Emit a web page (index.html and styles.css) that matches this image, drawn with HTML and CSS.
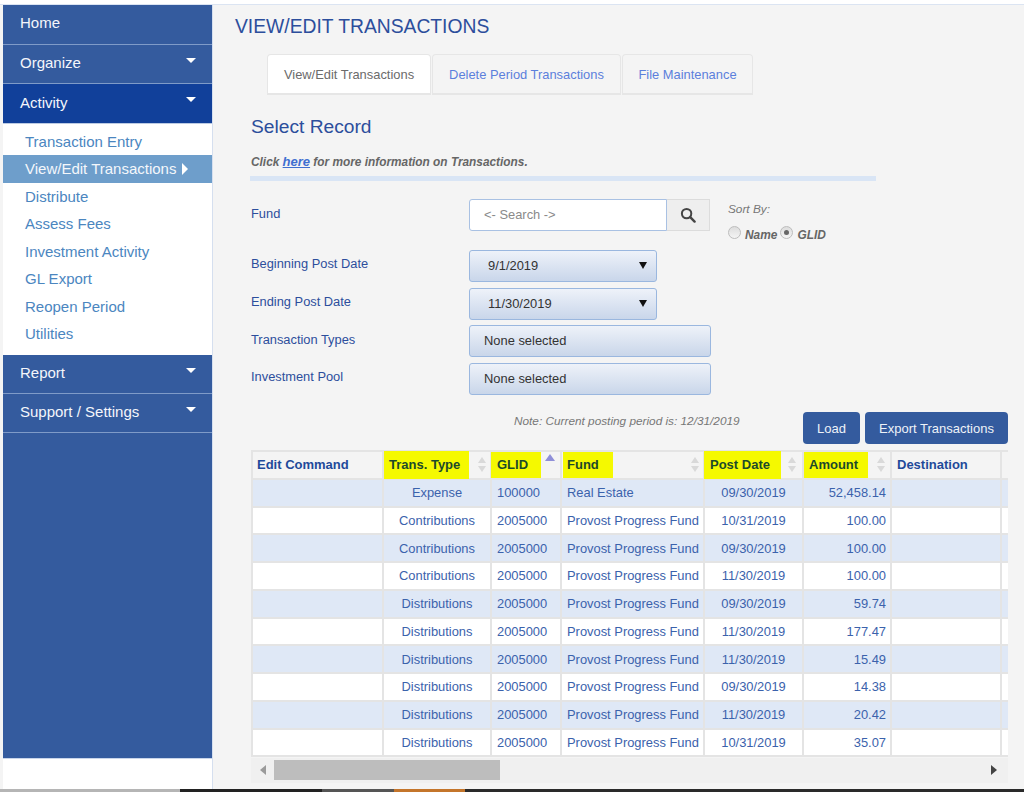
FILE: index.html
```html
<!DOCTYPE html>
<html lang="en">
<head>
<meta charset="utf-8">
<title>View/Edit Transactions</title>
<link rel="stylesheet" href="styles.css">
</head>
<body>
<div class="topstrip"></div>
<div class="shell">
  <nav class="sidebar">
    <a class="nav-item nav-home">Home</a>
    <a class="nav-item nav-org">Organize<i class="caret"></i></a>
    <a class="nav-item active">Activity<i class="caret"></i></a>
    <div class="submenu">
      <a class="sub-item">Transaction Entry</a>
      <a class="sub-item current">View/Edit Transactions<i class="caret-right"></i></a>
      <a class="sub-item">Distribute</a>
      <a class="sub-item">Assess Fees</a>
      <a class="sub-item">Investment Activity</a>
      <a class="sub-item">GL Export</a>
      <a class="sub-item">Reopen Period</a>
      <a class="sub-item">Utilities</a>
    </div>
    <a class="nav-item">Report<i class="caret"></i></a>
    <a class="nav-item">Support / Settings<i class="caret"></i></a>
    <div class="nav-fill"></div>
    <div class="nav-foot"></div>
  </nav>
  <main class="content">
    <h1 class="page-title">VIEW/EDIT TRANSACTIONS</h1>
    <div class="tabs">
      <a class="tab tab-on">View/Edit Transactions</a>
      <a class="tab tab-delete">Delete Period Transactions</a>
      <a class="tab tab-file">File Maintenance</a>
    </div>
    <h2 class="section-title">Select Record</h2>
    <p class="hint">Click <a class="hint-link">here</a> for more information on Transactions.</p>
    <div class="hint-rule"></div>
    <div class="form">
      <div class="row row-fund">
        <label class="lbl">Fund</label>
        <div class="search">
          <div class="search-input">&lt;- Search -&gt;</div>
          <div class="search-btn">
            <svg width="16" height="16" viewBox="0 0 16 16"><circle cx="6.6" cy="6.6" r="4.7" fill="none" stroke="#444" stroke-width="2"/><path d="M10.2 10.2 L14.6 14.6" stroke="#444" stroke-width="2.4" stroke-linecap="round"/></svg>
          </div>
        </div>
        <div class="sort">
          <div class="sort-title">Sort By:</div>
          <div class="sort-opts"><span class="radio"></span><b>Name</b><span class="radio radio-on"></span><b>GLID</b></div>
        </div>
      </div>
      <div class="row row-begin">
        <label class="lbl">Beginning Post Date</label>
        <div class="drop drop-date"><span>9/1/2019</span><i class="drop-arrow"></i></div>
      </div>
      <div class="row">
        <label class="lbl">Ending Post Date</label>
        <div class="drop drop-date"><span>11/30/2019</span><i class="drop-arrow"></i></div>
      </div>
      <div class="row">
        <label class="lbl">Transaction Types</label>
        <div class="drop drop-multi">None selected</div>
      </div>
      <div class="row">
        <label class="lbl">Investment Pool</label>
        <div class="drop drop-multi">None selected</div>
      </div>
    </div>
    <div class="actions">
      <span class="note">Note: Current posting period is: 12/31/2019</span>
      <a class="btn btn-load">Load</a>
      <a class="btn">Export Transactions</a>
    </div>
    <div class="grid-wrap">
      <table class="grid">
        <colgroup>
          <col class="c1"><col class="c2"><col class="c3"><col class="c4"><col class="c5"><col class="c6"><col class="c7"><col class="c8">
        </colgroup>
        <thead>
          <tr>
            <th class="th-first">Edit Command</th>
            <th class="th-hl"><div class="th-in"><span class="hl hl-type">Trans. Type</span><svg class="sort-ic" width="8" height="15" viewBox="0 0 8 15"><path d="M4 0 L8 6 H0 Z M0 9 H8 L4 15 Z" fill="#d9d9d9"/></svg></div></th>
            <th class="th-hl"><div class="th-in"><span class="hl hl-glid">GLID</span><svg class="sort-up" width="10" height="8" viewBox="0 0 10 8"><path d="M5 0 L10 7 H0 Z" fill="#8f8fd8"/></svg></div></th>
            <th class="th-hl"><div class="th-in"><span class="hl hl-fund">Fund</span><svg class="sort-ic" width="8" height="15" viewBox="0 0 8 15"><path d="M4 0 L8 6 H0 Z M0 9 H8 L4 15 Z" fill="#d9d9d9"/></svg></div></th>
            <th class="th-hl"><div class="th-in"><span class="hl hl-post">Post Date</span><svg class="sort-ic" width="8" height="15" viewBox="0 0 8 15"><path d="M4 0 L8 6 H0 Z M0 9 H8 L4 15 Z" fill="#d9d9d9"/></svg></div></th>
            <th class="th-hl"><div class="th-in"><span class="hl hl-amt">Amount</span><svg class="sort-ic" width="8" height="15" viewBox="0 0 8 15"><path d="M4 0 L8 6 H0 Z M0 9 H8 L4 15 Z" fill="#d9d9d9"/></svg></div></th>
            <th>Destination</th>
            <th></th>
          </tr>
        </thead>
        <tbody>
          <tr class="alt"><td></td><td class="ctr">Expense</td><td>100000</td><td>Real Estate</td><td class="ctr">09/30/2019</td><td class="num">52,458.14</td><td></td><td></td></tr>
          <tr><td></td><td class="ctr">Contributions</td><td>2005000</td><td>Provost Progress Fund</td><td class="ctr">10/31/2019</td><td class="num">100.00</td><td></td><td></td></tr>
          <tr class="alt"><td></td><td class="ctr">Contributions</td><td>2005000</td><td>Provost Progress Fund</td><td class="ctr">09/30/2019</td><td class="num">100.00</td><td></td><td></td></tr>
          <tr><td></td><td class="ctr">Contributions</td><td>2005000</td><td>Provost Progress Fund</td><td class="ctr">11/30/2019</td><td class="num">100.00</td><td></td><td></td></tr>
          <tr class="alt"><td></td><td class="ctr">Distributions</td><td>2005000</td><td>Provost Progress Fund</td><td class="ctr">09/30/2019</td><td class="num">59.74</td><td></td><td></td></tr>
          <tr><td></td><td class="ctr">Distributions</td><td>2005000</td><td>Provost Progress Fund</td><td class="ctr">11/30/2019</td><td class="num">177.47</td><td></td><td></td></tr>
          <tr class="alt"><td></td><td class="ctr">Distributions</td><td>2005000</td><td>Provost Progress Fund</td><td class="ctr">11/30/2019</td><td class="num">15.49</td><td></td><td></td></tr>
          <tr><td></td><td class="ctr">Distributions</td><td>2005000</td><td>Provost Progress Fund</td><td class="ctr">09/30/2019</td><td class="num">14.38</td><td></td><td></td></tr>
          <tr class="alt"><td></td><td class="ctr">Distributions</td><td>2005000</td><td>Provost Progress Fund</td><td class="ctr">11/30/2019</td><td class="num">20.42</td><td></td><td></td></tr>
          <tr><td></td><td class="ctr">Distributions</td><td>2005000</td><td>Provost Progress Fund</td><td class="ctr">10/31/2019</td><td class="num">35.07</td><td></td><td></td></tr>
        </tbody>
      </table>
    </div>
    <div class="hscroll">
      <i class="sb-left"></i>
      <div class="sb-thumb"></div>
      <i class="sb-right"></i>
    </div>
  </main>
</div>
<div class="taskbar">
  <span class="tb tb-a"></span><span class="tb tb-b"></span><span class="tb tb-c"></span><span class="tb tb-d"></span><span class="tb tb-e"></span>
</div>
</body>
</html>
```
FILE: styles.css
```css
* { box-sizing: border-box; }
html, body { margin: 0; padding: 0; height: 792px; overflow: hidden; }
body {
  display: flex;
  flex-direction: column;
  background: #f4f4f4;
  font-family: "Liberation Sans", Arial, sans-serif;
}
.topstrip { height: 5px; flex: none; background: #fff; border-bottom: 1px solid #dbe4f2; }
.shell { flex: 1; display: flex; min-height: 0; }

/* Sidebar */
.sidebar {
  flex: none;
  width: 210px;
  margin-left: 3px;
  display: flex;
  flex-direction: column;
  background: #fff;
  border-right: 1px solid #d5dfef;
}
.nav-item {
  position: relative;
  display: flex;
  align-items: center;
  height: 39px;
  padding: 0 0 3px 17px;
  background: #345b9e;
  border-bottom: 1px solid #7f9bc8;
  color: #f4f6fb;
  font-size: 15px;
}
.nav-home { height: 40px; padding-bottom: 5px; }
.nav-org { padding-bottom: 3px; }
.nav-item.active { background: #11409a; border-bottom: 0; padding-bottom: 3px; }
.caret {
  position: absolute;
  right: 16px;
  top: 13px;
  border-left: 5px solid transparent;
  border-right: 5px solid transparent;
  border-top: 5px solid #fff;
}
.submenu { display: flex; flex-direction: column; padding: 3.5px 0 0; border-top: 1px solid #bccbe3; height: 232px; }
.sub-item {
  display: flex;
  align-items: center;
  flex: none;
  height: 27.5px;
  padding-left: 22px;
  color: #4b86bf;
  font-size: 15px;
}
.sub-item.current { background: #6e9ecb; color: #f4f7fb; }
.caret-right {
  margin-left: 6px;
  border-top: 6px solid transparent;
  border-bottom: 6px solid transparent;
  border-left: 6px solid #fff;
}
.nav-fill { flex: 1; background: #345b9e; }
.nav-foot { height: 31px; flex: none; background: #fff; border-top: 1px solid #c8d5ea; }

/* Content */
.content { flex: 1; min-width: 0; padding: 0 16px 0 22px; display: flex; flex-direction: column; overflow: hidden; }
.page-title {
  margin: 13px 0 0 0;
  font-size: 19.3px;
  line-height: 18px;
  font-weight: 400;
  color: #2c4e9c;
}
.tabs { display: flex; margin: 18px 0 0 32px; gap: 1px; height: 41px; flex: none; }
.tab {
  display: flex;
  align-items: center;
  justify-content: center;
  font-size: 12.9px;
  color: #5b7fdc;
  border: 1px solid #e6e6e6;
  border-bottom-width: 2px;
  border-radius: 4px 4px 0 0;
}
.tab-on { width: 164px; background: #fff; color: #6b6b6b; }
.tab-delete { width: 189px; }
.tab-file { width: 131px; }
.section-title {
  margin: 21px 0 0 16px;
  font-size: 19.2px;
  line-height: 22px;
  font-weight: 400;
  color: #2c4e9c;
}
.hint {
  margin: 17px 0 0 16px;
  font-size: 11.85px;
  line-height: 14px;
  font-weight: 700;
  font-style: italic;
  color: #666;
}
.hint-link { color: #3f6fd0; text-decoration: underline; font-size: 13px; }
.hint-rule { width: 626px; height: 5px; margin: 7px 0 0 15px; background: #d9e5f5; flex: none; }

/* Form */
.form { margin: 18px 0 0 16px; display: flex; flex-direction: column; gap: 5.6px; flex: none; }
.row { display: flex; align-items: center; }
.row-begin { margin-top: 13.4px; }
.lbl { width: 218px; flex: none; font-size: 12.85px; color: #2c4e9c; padding-bottom: 4px; }
.row-fund { height: 32px; align-items: flex-start; }
.row-fund .lbl { padding: 7px 0 0; }
.search { display: flex; height: 32px; width: 241px; flex: none; }
.search-input {
  width: 199px;
  height: 32px;
  background: #fff;
  border: 1px solid #a9c1e3;
  border-radius: 3px 0 0 3px;
  padding: 0 14px 2px;
  display: flex;
  align-items: center;
  color: #8a8a8a;
  font-size: 12.9px;
}
.search-btn {
  width: 43px;
  height: 32px;
  display: flex;
  align-items: center;
  justify-content: center;
  background: #eee;
  border: 1px solid #dcdcdc;
  border-left: 0;
}
.sort { margin-left: 18px; font-size: 11.8px; font-style: italic; color: #777; }
.sort-title { margin-top: 4px; line-height: 13px; }
.sort-opts { display: flex; align-items: center; margin-top: 12px; color: #666; font-size: 11.9px; }
.sort-opts b { margin-right: 3px; }
.radio {
  width: 13px;
  height: 13px;
  margin: -5px 4px 0 0;
  border-radius: 50%;
  background: linear-gradient(#ddd, #f4f4f4);
  border: 1px solid #bdbdbd;
  position: relative;
}
.radio-on::after {
  content: "";
  position: absolute;
  left: 3px;
  top: 3px;
  width: 5px;
  height: 5px;
  border-radius: 50%;
  background: #666;
}
.drop {
  display: flex;
  align-items: center;
  height: 32px;
  border: 1px solid #9ab7df;
  border-radius: 3px;
  background: linear-gradient(#eef2f9, #c9d6ea);
  color: #333;
  font-size: 12.9px;
}
.drop-date { width: 188px; padding: 0 8px 1px 18px; justify-content: space-between; }
.drop-multi { width: 242px; padding: 0 14px 1px; }
.drop-arrow {
  border-left: 4px solid transparent;
  border-right: 4px solid transparent;
  border-top: 7px solid #111;
  margin-right: 1px;
}

/* Actions */
.actions { position: relative; display: flex; justify-content: flex-end; gap: 5px; height: 32px; margin: 17px 0 0 0; flex: none; }
.note {
  position: absolute;
  left: 279px;
  top: 2px;
  font-size: 11.8px;
  font-style: italic;
  color: #777;
}
.btn {
  display: flex;
  align-items: center;
  justify-content: center;
  width: 143px;
  height: 32px;
  padding-top: 1px;
  background: #345b9e;
  border-radius: 4px;
  color: #eef2f8;
  font-size: 13px;
}
.btn-load { width: 57px; }

/* Grid */
.grid-wrap { margin: 6px 0 0 16px; overflow: hidden; flex: none; height: 307px; width: 757px; }
.grid { border-collapse: collapse; table-layout: fixed; width: 759px; font-size: 12.9px; }
.c1 { width: 131px; } .c2 { width: 108px; } .c3 { width: 70px; } .c4 { width: 143px; }
.c5 { width: 99px; } .c6 { width: 88px; } .c7 { width: 110px; } .c8 { width: 10px; }
.grid th, .grid td { border: 2px solid #e4e4e4; padding: 0 5px; height: 27.75px; color: #3b62ac; white-space: nowrap; }
.grid th { height: 28px; text-align: left; color: #1f4a9a; font-size: 13px; font-weight: 700; background: #f4f4f4; }
.grid .th-first { padding-left: 4px; }
.grid tbody tr { background: #fff; }
.grid tbody tr.alt { background: #dfe8f6; }
.grid .ctr { text-align: center; }
.grid .num { text-align: right; padding-right: 4px; }
.grid .th-hl { padding: 0 4px 0 1px; }
.th-in { display: flex; align-items: center; justify-content: space-between; height: 24px; }
.hl { display: block; background: #f5f900; color: #1c4a2a; height: 26px; line-height: 26px; padding-left: 5px; }
.hl-type { width: 85px; height: 28px; line-height: 28px; margin-left: -1px; }
.hl-glid { width: 50px; margin-left: -2px; padding-left: 6px; }
.hl-fund { width: 50px; padding-left: 4px; }
.hl-post { width: 77px; margin-left: -2px; padding-left: 6px; height: 28px; line-height: 28px; }
.hl-amt { width: 64px; margin-left: -1px; }
.hl-post + .sort-ic { margin-right: 2px; }
.hl-amt + .sort-ic { margin-right: 1px; }
.sort-up { align-self: flex-start; margin: 1px 1px 0 0; }

/* Scrollbar */
.hscroll {
  position: relative;
  display: flex;
  align-items: center;
  justify-content: space-between;
  flex: none;
  width: 757px;
  height: 25px;
  margin: 1px 0 0 16px;
  background: #f0f0f0;
  padding: 0 9px;
}
.sb-thumb { position: absolute; left: 23px; top: 2px; width: 226px; height: 20px; background: #bdbdbd; }
.sb-left { border-top: 5px solid transparent; border-bottom: 5px solid transparent; border-right: 6px solid #9a9a9a; }
.sb-right { border-top: 5px solid transparent; border-bottom: 5px solid transparent; border-left: 6px solid #444; margin-right: 2px; }

/* OS strip */
.taskbar { flex: none; height: 3px; display: flex; background: #2a2a2a; }
.tb { display: block; height: 3px; }
.tb-a { width: 180px; background: #b5b5b5; }
.tb-b { width: 142px; background: #222; }
.tb-c { width: 72px; background: #555; }
.tb-d { width: 71px; background: #c4752b; }
.tb-e { flex: 1; background: #2a2a2a; }
```
